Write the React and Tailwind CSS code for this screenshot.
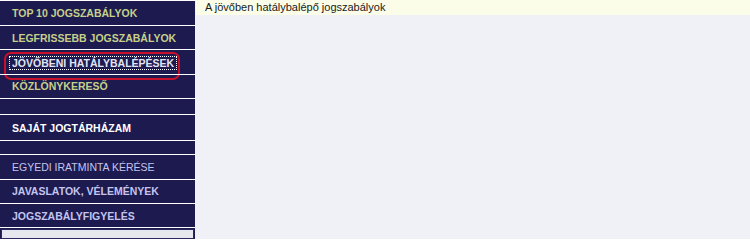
import React from 'react';

const topLinks = [
    { label: 'TOP 10 JOGSZABÁLYOK', h: 'h-[26px]' },
    { label: 'LEGFRISSEBB JOGSZABÁLYOK', h: 'h-[25px]' },
    { label: 'JÖVŐBENI HATÁLYBALÉPÉSEK', h: 'h-[25px]', active: true },
    { label: 'KÖZLÖNYKERESŐ', h: 'h-[25px]' },
];

const bottomLinks = ['EGYEDI IRATMINTA KÉRÉSE', 'JAVASLATOK, VÉLEMÉNYEK', 'JOGSZABÁLYFIGYELÉS'];

function MenuRow({ children, className = '' }) {
    return (
        <div className={`relative border-t border-white flex items-center pl-3 pt-[2px] ${className}`}>
            {children}
        </div>
    );
}

export default function App() {
    return (
        <div className="flex h-[239px] w-[750px] overflow-hidden bg-[#f0f0f7] font-['Liberation_Sans',Arial,sans-serif]">
            {/* Left menu */}
            <nav className="w-[195px] shrink-0 bg-[#1c1a4f] flex flex-col text-[10.5px] font-bold">
                {topLinks.map(link => (
                    <MenuRow key={link.label} className={link.h}>
                        {link.active ? (
                            <>
                                <span className="text-[#e4e6f4] outline-1 outline-dotted outline-white -ml-[2px] px-[2px] leading-[12px]">
                                    {link.label}
                                </span>
                                {/* red highlight around the current item */}
                                <span className="absolute block left-[4px] top-[2px] w-[176px] h-[28px] rounded-[7px] border-2 border-[#c8102a]" />
                            </>
                        ) : (
                            <span className="text-[#c6d08a]">{link.label}</span>
                        )}
                    </MenuRow>
                ))}

                <MenuRow className="h-[17px]" />
                <MenuRow className="h-[26px]">
                    <span className="text-white">SAJÁT JOGTÁRHÁZAM</span>
                </MenuRow>
                <MenuRow className="h-[15px]" />

                {bottomLinks.map((label, i) => (
                    <MenuRow key={label} className="h-[25px]">
                        <span className={`text-[#c4c4ee] ${i === 0 ? 'font-normal' : ''}`}>{label}</span>
                    </MenuRow>
                ))}

                <div className="border-t border-white pt-[1px] px-[1px]">
                    <div className="h-[10px] border border-[#2a2860] bg-[#e6e6ee]" />
                </div>
            </nav>

            {/* Content */}
            <main className="flex-1 ml-[1px]">
                <div className="h-[15px] bg-[#fbfde9] pl-[9px] text-[11px] leading-[15px] text-[#1a1a1a]">
                    A jövőben hatálybalépő jogszabályok
                </div>
            </main>
        </div>
    );
}
